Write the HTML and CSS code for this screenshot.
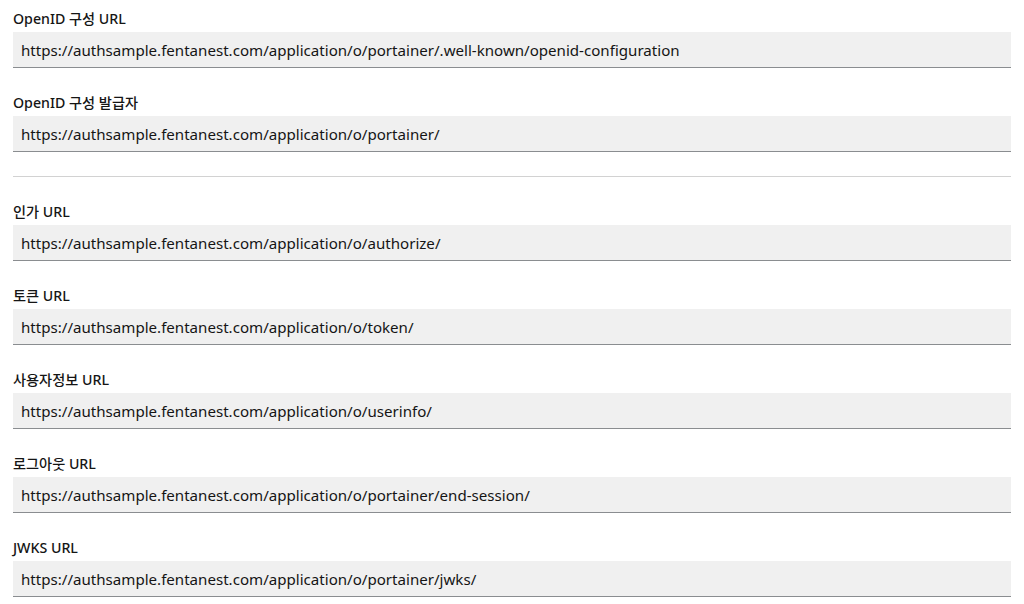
FILE: index.html
```html
<!DOCTYPE html>
<html lang="ko">
<head>
<meta charset="utf-8">
<title>OpenID</title>
<link rel="stylesheet" href="styles.css">
</head>
<body>
<main class="form">
  <div class="group">
    <label class="label">OpenID 구성 URL</label>
    <input class="control" readonly value="https://authsample.fentanest.com/application/o/portainer/.well-known/openid-configuration">
  </div>
  <div class="group">
    <label class="label">OpenID 구성 발급자</label>
    <input class="control" readonly value="https://authsample.fentanest.com/application/o/portainer/">
  </div>
  <hr class="divider">
  <div class="group">
    <label class="label">인가 URL</label>
    <input class="control" readonly value="https://authsample.fentanest.com/application/o/authorize/">
  </div>
  <div class="group">
    <label class="label">토큰 URL</label>
    <input class="control" readonly value="https://authsample.fentanest.com/application/o/token/">
  </div>
  <div class="group">
    <label class="label">사용자정보 URL</label>
    <input class="control" readonly value="https://authsample.fentanest.com/application/o/userinfo/">
  </div>
  <div class="group">
    <label class="label">로그아웃 URL</label>
    <input class="control" readonly value="https://authsample.fentanest.com/application/o/portainer/end-session/">
  </div>
  <div class="group">
    <label class="label">JWKS URL</label>
    <input class="control" readonly value="https://authsample.fentanest.com/application/o/portainer/jwks/">
  </div>
</main>
</body>
</html>
```
FILE: styles.css
```css
html, body {
  margin: 0;
  padding: 0;
  background: #ffffff;
}
body {
  font-family: "Noto Sans", "Noto Sans CJK KR", sans-serif;
  color: #151515;
}
.form {
  display: flex;
  flex-direction: column;
  gap: 24px;
  padding: 8px 13px 0 13px;
}
.group {
  display: flex;
  flex-direction: column;
  gap: 2px;
}
.label {
  font-size: 14.2px;
  font-weight: 500;
  line-height: 22px;
  color: #151515;
}
.control {
  box-sizing: border-box;
  height: 36px;
  width: 100%;
  margin: 0;
  padding: 6px 8px;
  border: 0;
  border-bottom: 1px solid #8a8d90;
  background: #f0f0f0;
  font-family: "Noto Sans", "Noto Sans CJK KR", sans-serif;
  font-size: 15.1px;
  color: #151515;
  outline: none;
}
.divider {
  margin: 0;
  border: 0;
  border-top: 1px solid #d2d2d2;
  height: 0;
}
```
